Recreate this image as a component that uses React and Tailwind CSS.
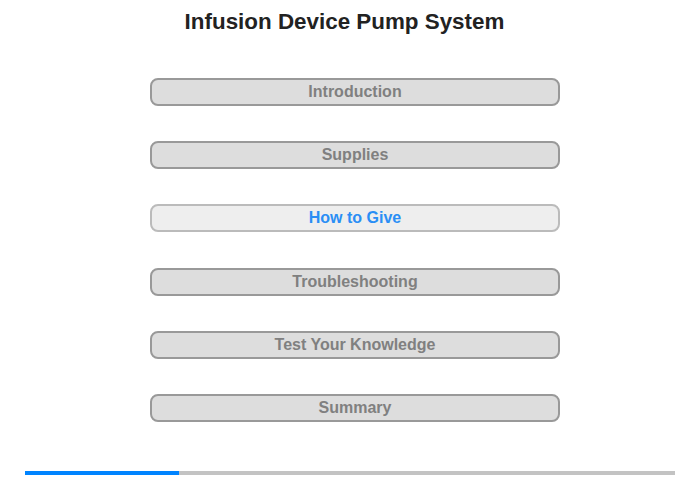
import React from 'react';

const sections = ['Introduction', 'Supplies', 'How to Give', 'Troubleshooting', 'Test Your Knowledge', 'Summary'];

const App = () => {
    const active = 'How to Give';
    return (
        <div className="w-[700px] h-[480px] bg-white font-['Liberation_Sans',Arial,sans-serif] relative">
            <h1 className="h-[34px] pt-[9px] pr-[11px] text-center text-[22.4px] leading-[25px] font-bold text-[#222]">
                Infusion Device Pump System
            </h1>
            <div className="mt-[44px] ml-[150px] w-[410px] flex flex-col gap-[35.2px]">
                {sections.map((s) => (
                    <button
                        key={s}
                        className={
                            s === active
                                ? 'h-[28px] rounded-[8px] border-2 border-[#bbb] bg-[#eee] text-[#2a8ef5] text-[16px] font-bold leading-none'
                                : 'h-[28px] rounded-[8px] border-2 border-[#999] bg-[#ddd] text-[#808080] text-[16px] font-bold leading-none'
                        }
                    >
                        {s}
                    </button>
                ))}
            </div>
            <div className="absolute left-[25px] top-[471px] w-[650px] h-[4px] bg-[#c3c3c3]">
                <div className="w-[154px] h-full bg-[#0084ff]" />
            </div>
        </div>
    );
};

export default App;
